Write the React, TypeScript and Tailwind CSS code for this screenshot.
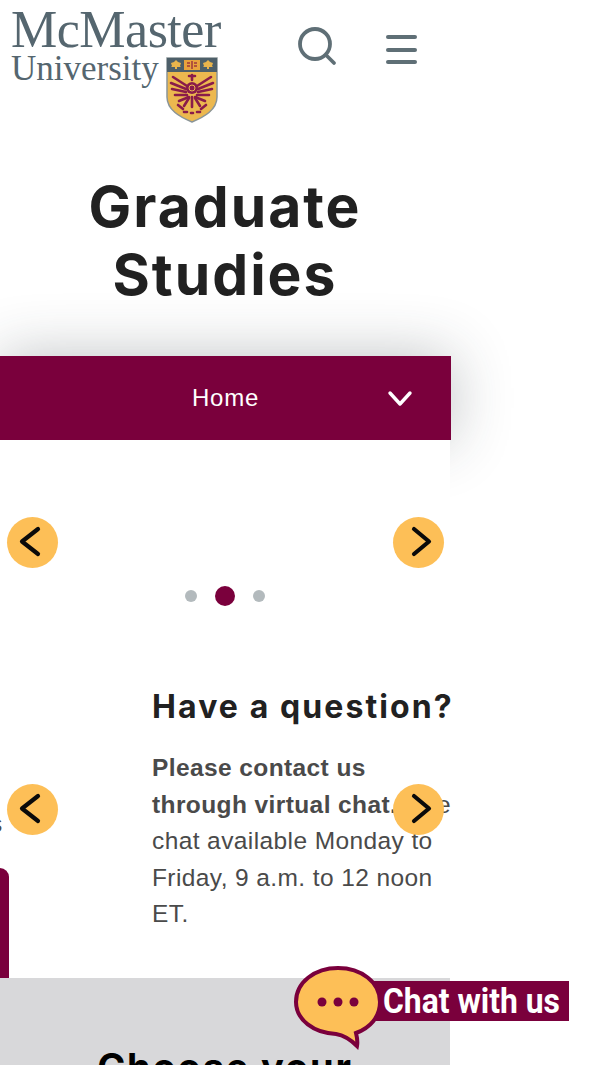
const headingFont = "font-['Inter','Noto_Sans',sans-serif]";

function Shield() {
    return (
        <svg width="52" height="66" viewBox="0 0 52 66" className="shrink-0">
            <path d="M1 1H51V40C51 53 38 60 26 65C14 60 1 53 1 40Z" fill="#ecb84f" stroke="#8a9598" strokeWidth="1.5" />
            <path d="M1 1H51V15H1Z" fill="#4d5f69" />
            <rect x="18" y="3" width="16" height="10" fill="#e8a33d" />
            <path d="M26 4V12M21 6h3M28 6h3M21 9h3M28 9h3" stroke="#7a003c" strokeWidth="1" />
            <path d="M10 3l2 2 3 1-1 3 1 1h-4v2h-2v-2H5l1-1-1-3 3-1z" fill="#e9b44c" />
            <path d="M42 3l2 2 3 1-1 3 1 1h-4v2h-2v-2h-4l1-1-1-3 3-1z" fill="#e9b44c" />
            <g stroke="#8a1c4a" strokeWidth="2.6" strokeLinecap="round" fill="none">
                <path d="M21 29L7 20M20 32L5 26M20 35L6 32M21 38L9 38M23 40L13 44" />
                <path d="M31 29L45 20M32 32L47 26M32 35L46 32M31 38L43 38M29 40L39 44" />
                <path d="M26 40V50M23 41L18 49M29 41L34 49" />
                <path d="M26 23V18M23 19h6" />
                <path d="M12 48l5 4M40 48l-5 4M18 55h3M31 55h3M25 56h2" />
            </g>
            <circle cx="26" cy="31" r="6" fill="#8a1c4a" />
            <circle cx="26" cy="31" r="3" fill="none" stroke="#ecb84f" strokeWidth="1" />
        </svg>
    );
}

function CarouselArrow({ side, className }: { side: 'left' | 'right'; className: string }) {
    return (
        <button className={`absolute flex h-[51px] w-[51px] items-center justify-center rounded-full bg-[#fdbf57] ${className}`}>
            <svg width="51" height="51" viewBox="0 0 51 51" fill="none" stroke="#0a0a0a" strokeWidth="4.2" strokeLinecap="round" strokeLinejoin="round">
                <path d={side === 'left' ? 'M31 12L15 24.5L31 37' : 'M21 12L36 24.5L21 37'} />
            </svg>
        </button>
    );
}

function ChatWidget() {
    return (
        <div className="absolute left-[294px] top-[966px] h-[84px] w-[276px]">
            <div className="absolute left-[70px] top-[15px] flex h-[40px] w-[205px] items-center bg-[#7a003c] pl-[19px]">
                <span className="origin-left scale-x-[0.91] whitespace-nowrap font-['Roboto',sans-serif] text-[35px] font-bold leading-none text-white">
                    Chat with us
                </span>
            </div>
            <svg width="92" height="84" viewBox="0 0 92 84" className="absolute left-0 top-0">
                <path
                    d="M44 2C21 2 2 16 2 36C2 54 20 67 42 68C48 69 56 73 63 80C64 75 63 71 62 67C76 62 86 51 86 36C86 16 67 2 44 2Z"
                    fill="#fdbf57"
                    stroke="#7a003c"
                    strokeWidth="4"
                />
                <circle cx="28" cy="36" r="4.5" fill="#7a003c" />
                <circle cx="44" cy="36" r="4.5" fill="#7a003c" />
                <circle cx="60" cy="36" r="4.5" fill="#7a003c" />
            </svg>
        </div>
    );
}

export default function App() {
    return (
        <div className="relative h-[1065px] w-[600px] overflow-hidden bg-white font-['Liberation_Sans',Arial,sans-serif]">
            <div className="w-[450px]">
                <header className="flex h-[130px] items-start pl-[11px]">
                    <div className="w-[215px] pt-[5px] font-['Liberation_Serif',serif] text-[#55666f]">
                        <div className="whitespace-nowrap text-[52px] leading-[50px] tracking-[-0.5px]">McMaster</div>
                        <div className="flex items-start">
                            <span className="-mt-[3px] whitespace-nowrap text-[35px] leading-[34px]">University</span>
                            <div className="ml-[7px] mt-[2px]">
                                <Shield />
                            </div>
                        </div>
                    </div>
                    <div className="ml-[72px] flex items-start pt-[27px]">
                        <svg width="40" height="40" viewBox="0 0 40 40" fill="none" stroke="#5f6f76" strokeWidth="3.8" strokeLinecap="round">
                            <circle cx="17" cy="17" r="15" />
                            <path d="M28 28L36 36" />
                        </svg>
                        <div className="ml-[48px] mt-[8px] flex w-[31px] flex-col gap-[8.5px]">
                            <span className="h-[4px] rounded-full bg-[#5f6f76]" />
                            <span className="h-[4px] rounded-full bg-[#5f6f76]" />
                            <span className="h-[4px] rounded-full bg-[#5f6f76]" />
                        </div>
                    </div>
                </header>

                <h1 className={`${headingFont} pt-[43px] text-center text-[57px] font-bold leading-[68px] tracking-[2px] text-[#212121]`}>
                    Graduate
                    <br />
                    Studies
                </h1>

                <nav className="relative mt-[47px] flex h-[84px] w-[451px] items-center justify-center bg-[#7a003c] text-[24px] tracking-[0.8px] text-white shadow-[0_0_60px_rgba(40,50,55,0.3)]">
                    Home
                    <svg width="26" height="18" viewBox="0 0 26 18" fill="none" stroke="white" strokeWidth="3.4" strokeLinecap="round" strokeLinejoin="round" className="absolute right-[38px] top-[34px]">
                        <path d="M3 3L13 14L23 3" />
                    </svg>
                </nav>

                <section className="relative h-[538px] bg-white">
                    <div className="flex items-center justify-center gap-[18px] pt-[146px]">
                        <span className="h-[12px] w-[12px] rounded-full bg-[#b3babd]" />
                        <span className="h-[20px] w-[20px] rounded-full bg-[#7a003c]" />
                        <span className="h-[12px] w-[12px] rounded-full bg-[#b3babd]" />
                    </div>
                    <div className="ml-[152px] w-[310px] pt-[78px]">
                        <h2 className={`${headingFont} whitespace-nowrap text-[32px] font-bold leading-[46px] tracking-[2.1px] text-[#212121]`}>
                            Have a question?
                        </h2>
                        <p className="mt-[20px] w-[300px] text-[24.5px] leading-[36.5px] tracking-[0.4px] text-[#4a4a4a]">
                            <strong>Please contact us through virtual chat.</strong> Live chat available Monday to Friday, 9 a.m. to 12 noon ET.
                        </p>
                    </div>
                    <div className="absolute bottom-0 left-0 h-[110px] w-[9px] rounded-tr-[10px] bg-[#7a003c]" />
                </section>

                <section className="h-[200px] bg-[#d8d8da] pt-[66px]">
                    <h2 className={`${headingFont} text-center text-[38px] font-bold leading-[46px] tracking-[1.8px] text-black`}>Choose your</h2>
                </section>
            </div>

            {/* tail of the previous slide's text, clipped by the page edge */}
            <span className="absolute left-[-10px] top-[812px] text-[24.5px] leading-[24px] text-[#4a4a4a]">s</span>

            <CarouselArrow side="left" className="left-[7px] top-[517px]" />
            <CarouselArrow side="right" className="left-[393px] top-[517px]" />
            <CarouselArrow side="left" className="left-[7px] top-[784px]" />
            <CarouselArrow side="right" className="left-[393px] top-[784px]" />
            <ChatWidget />
        </div>
    );
}
